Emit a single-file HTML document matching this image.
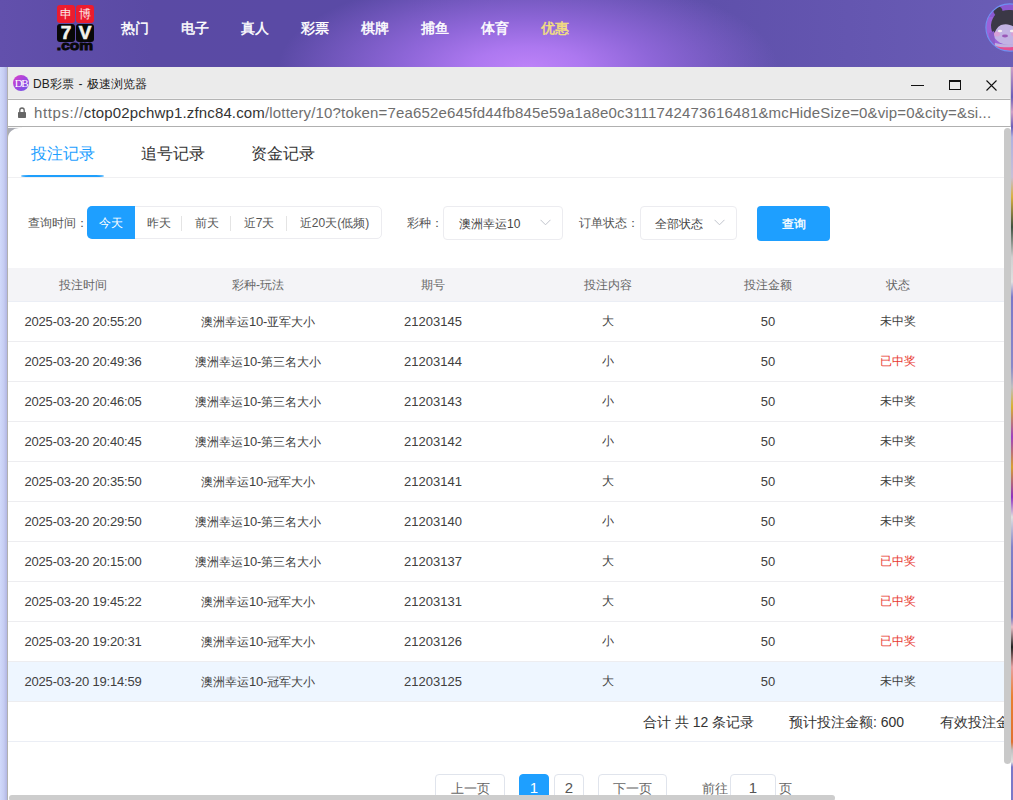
<!DOCTYPE html>
<html><head><meta charset="utf-8">
<style>
*{margin:0;padding:0;box-sizing:border-box}
html,body{width:1013px;height:800px;overflow:hidden;background:#6a5db6;font-family:"Liberation Sans",sans-serif;position:relative}
.a{position:absolute}
.t{position:absolute;white-space:nowrap}
#top{left:0;top:0;width:1013px;height:67px;
 background:radial-gradient(ellipse 250px 95px at 528px 68px,#bd82f8 0%,#ad78f0 22%,#8e66d8 50%,rgba(100,80,180,0) 100%),linear-gradient(90deg,#6250ac 0%,#5a4aa4 15%,#5a4aa6 40%,#5f50ab 70%,#6a5db6 100%)}
.nav{position:absolute;top:19px;color:#fff;font-size:14px;font-weight:normal;line-height:18px;-webkit-text-stroke:0.45px #fff}
#leftbg{left:0;top:67px;width:7px;height:733px;background:linear-gradient(90deg,#d0d9fb 0%,#c6cdf2 55%,#b2b6e4 100%)}
#rightbg{left:1011px;top:67px;width:2px;height:733px;background:linear-gradient(180deg,#d0a0c8 0px,#6a5cb8 30px,#d0a0c8 45px,#6a5cb8 60px,#b0b0e0 70px,#c8c0d8 110px,#d8b040 130px,#405040 160px,#d0d0d0 190px,#e0e0e0 215px,#7a78c8 230px,#8a88c8 300px,#c0c0c0 320px,#d8b030 340px,#a040c0 370px,#d8a030 400px,#9030c0 430px,#e0e0e0 450px,#8080c8 480px,#7070c0 550px,#e8c0c8 560px,#202020 580px,#e8a0a0 600px,#e88030 630px,#e07030 675px,#c0c0c0 683px,#e0e0e0 695px,#7a78c8 700px,#7a78c8 733px)}
#wborder{left:7px;top:67px;width:1px;height:733px;background:#b0b0b0}
#title{left:8px;top:67px;width:1003px;height:33px;background:linear-gradient(180deg,#ebebeb 0,#ebebeb 31px,#f0f0f0 31px);border-bottom:1px solid #b4b4b4;border-right:1px solid #d4d4d4}
#addr{left:8px;top:100px;width:1003px;height:27px;background:#fff;border-bottom:1px solid #b0b0b0;border-right:1px solid #d4d4d4}
#cbg{left:8px;top:128px;width:1003px;height:672px;background:#a9abb3}
#content{left:8px;top:127px;width:1003px;height:673px;background:#fff;overflow:hidden}
.c{position:absolute;white-space:nowrap}
.seg{position:absolute;top:0;height:32px;line-height:33px;font-size:12px;color:#555;text-align:center}
.sep{position:absolute;top:9px;width:1px;height:15px;background:#e4e4e4}
.row{position:absolute;left:0;width:996px;height:40px;border-bottom:1px solid #ededf0;font-size:12px;color:#404040;line-height:39px}
.n{font-size:13px;letter-spacing:-0.2px}
.row span.n.c3,.row span.n.c5{letter-spacing:0}
.row span,.hdr span{position:absolute;top:0;text-align:center;white-space:nowrap}

.c1{left:0;width:150px}.c2{left:150px;width:200px}.c3{left:350px;width:150px}.c4{left:500px;width:200px}.c5{left:700px;width:120px}.c6{left:820px;width:140px}
.red{color:#e83a32}
.pbtn{position:absolute;top:647px;height:32px;border:1px solid #e0e4ec;border-radius:4px;font-size:13px;color:#666;text-align:center;line-height:28px;background:#fff}
</style></head><body>
<div id="top" class="a">
  <div class="nav" style="left:121px">热门</div>
  <div class="nav" style="left:181px">电子</div>
  <div class="nav" style="left:241px">真人</div>
  <div class="nav" style="left:301px">彩票</div>
  <div class="nav" style="left:361px">棋牌</div>
  <div class="nav" style="left:421px">捕鱼</div>
  <div class="nav" style="left:481px">体育</div>
  <div class="nav" style="left:541px;color:#f5e07c;-webkit-text-stroke-color:#f5e07c">优惠</div>
  <!-- logo -->
  <div class="a" style="left:57px;top:5px;width:18px;height:18px;background:#ec1c2e;border-radius:3px"></div>
  <div class="a" style="left:76px;top:5px;width:18px;height:18px;background:#ec1c2e;border-radius:3px"></div>
  <div class="t" style="left:57px;top:5px;width:18px;line-height:18px;font-size:12px;color:#fde8e8;text-align:center">申</div>
  <div class="t" style="left:76px;top:5px;width:18px;line-height:18px;font-size:12px;color:#fde8e8;text-align:center">博</div>
  <div class="a" style="left:57px;top:24px;width:18px;height:18px;background:#080808;border-radius:3px"></div>
  <div class="a" style="left:76px;top:24px;width:18px;height:18px;background:#080808;border-radius:3px"></div>
  <div class="t" style="left:57px;top:24px;width:18px;line-height:18px;font-size:19px;font-weight:bold;color:#f2f2ec;text-align:center;-webkit-text-stroke:0.6px #f2f2ec">7</div>
  <div class="t" style="left:76px;top:24px;width:18px;line-height:18px;font-size:19px;font-weight:bold;color:#f2f2ec;text-align:center;-webkit-text-stroke:0.6px #f2f2ec">V</div>
  <div class="t" style="left:56px;top:39px;width:38px;line-height:14px;font-size:13.5px;font-weight:bold;color:#080808;text-align:center;-webkit-text-stroke:0.9px #080808;transform:scaleX(1.15);transform-origin:50% 50%">.com</div>
  <!-- avatar -->
  <svg class="a" style="left:985px;top:3px" width="49" height="49" viewBox="0 0 49 49">
    <defs><clipPath id="cc"><circle cx="24.5" cy="24.5" r="23.6"/></clipPath></defs>
    <g clip-path="url(#cc)">
      <rect x="0" y="0" width="49" height="49" fill="#9a62d8"/>
      <rect x="0" y="0" width="49" height="14" fill="#8a58d0"/>
      <ellipse cx="24" cy="27" rx="17" ry="15" fill="#c2b2e4"/>
      <path d="M6 22 C7 12 14 7 24 7 C34 7 42 11 48 16 L48 22 C42 19 36 18 30 19 L29 24 C26 22 22 20 16 22 C12 24 10 28 9 32 C7 30 6 26 6 22Z" fill="#3b3846"/>
      <circle cx="13" cy="8" r="4.5" fill="#3b3846"/>
      <path d="M4 30 L9 28 L10 40 L5 42Z" fill="#8a5ec8"/>
      <ellipse cx="12" cy="31" rx="3" ry="2.5" fill="#d8a0d8"/>
      <ellipse cx="29" cy="31" rx="3" ry="2.5" fill="#d8a0d8"/>
      <ellipse cx="15" cy="28" rx="2.2" ry="1.3" fill="#f4ecf0"/>
      <ellipse cx="27" cy="28" rx="2.2" ry="1.3" fill="#f4ecf0"/>
      <ellipse cx="20" cy="33" rx="3" ry="1.4" fill="#9a58b8"/>
      <path d="M8 41 C16 44 30 44 49 40 L49 49 L8 49Z" fill="#e45092"/>
      <path d="M10 40 C18 42 30 42 49 38 L49 41 C30 45 18 45 10 43Z" fill="#c0b0e0"/>
    </g>
    <circle cx="24.5" cy="24.5" r="23.6" fill="none" stroke="#6f90f2" stroke-width="1.1"/>
  </svg>
</div>
<div id="leftbg" class="a"></div>
<div id="rightbg" class="a"></div>
<div id="wborder" class="a"></div>
<div id="title" class="a">
  <div class="a" style="left:5px;top:8px;width:16px;height:16px;border-radius:50%;background:linear-gradient(135deg,#e040c8 0%,#a048e0 50%,#6a58e8 100%)"></div>
  <div class="t" style="left:6px;top:8px;width:14px;line-height:17px;font-family:'Liberation Serif',serif;font-size:11px;color:#fff;text-align:center;letter-spacing:-1.5px">DB</div>
  <div class="t" style="left:25px;top:10px;font-size:12px;line-height:14px;color:#222;word-spacing:1.5px">DB彩票 - 极速浏览器</div>
  <!-- window controls -->
  <div class="a" style="left:903px;top:18px;width:13px;height:1px;background:#111"></div>
  <div class="a" style="left:941px;top:13px;width:12px;height:10px;border:1px solid #111;border-top-width:2px"></div>
  <svg class="a" style="left:978px;top:13px" width="11" height="11" viewBox="0 0 11 11"><path d="M0.5 0.5L10.5 10.5M10.5 0.5L0.5 10.5" stroke="#111" stroke-width="1.1"/></svg>
</div>
<div id="addr" class="a">
  <svg class="a" style="left:10px;top:7px" width="8" height="11" viewBox="0 0 8 11"><path d="M1.8 5V3.2A2.2 2.2 0 0 1 6.2 3.2V5" fill="none" stroke="#666" stroke-width="1.3"/><rect x="0" y="5" width="8" height="6" rx="0.8" fill="#666"/></svg>
  <div class="t" style="left:26px;top:4px;font-size:15px;line-height:18px;color:#6e6e6e;letter-spacing:0.155px"><span style="letter-spacing:0.6px">https://</span><span style="color:#333">ctop02pchwp1.zfnc84.com</span>/lottery/10?token=7ea652e645fd44fb845e59a1a8e0c3111742473616481&amp;mcHideSize=0&amp;vip=0&amp;city=&amp;si...</div>
</div>

<div id="content" class="a">
  <!-- tabs -->
  <div class="c" style="left:23px;top:17px;font-size:16px;line-height:20px;color:#1e9fff">投注记录</div>
  <div class="c" style="left:133px;top:17px;font-size:16px;line-height:20px;color:#333">追号记录</div>
  <div class="c" style="left:243px;top:17px;font-size:16px;line-height:20px;color:#333">资金记录</div>
  <div class="a" style="left:13px;top:48px;width:83px;height:2px;border-radius:8px/1px;background:#1f9ffc"></div>
  <div class="a" style="left:0;top:50px;width:996px;height:1px;background:#f0f0f2"></div>
  <!-- filter -->
  <div class="c" style="left:20px;top:89px;font-size:12px;line-height:15px;color:#555">查询时间：</div>
  <div class="a" style="left:79px;top:79px;width:295px;height:33px;border:1px solid #ececf0;border-radius:5px">
    <div class="seg" style="left:47px;width:47px">昨天</div>
    <div class="sep" style="left:93px"></div>
    <div class="seg" style="left:95px;width:48px">前天</div>
    <div class="sep" style="left:142px"></div>
    <div class="seg" style="left:143px;width:56px">近7天</div>
    <div class="sep" style="left:198px"></div>
    <div class="seg" style="left:199px;width:95px">近20天(低频)</div>
  </div>
  <div class="a" style="left:79px;top:79px;width:48px;height:33px;background:#1e9fff;color:#fff;border-radius:5px 0 0 5px;font-size:12px;text-align:center;line-height:34px">今天</div>
  <div class="c" style="left:399px;top:89px;font-size:12px;line-height:15px;color:#555">彩种：</div>
  <div class="a" style="left:435px;top:79px;width:120px;height:34px;border:1px solid #ececf0;border-radius:4px"></div>
  <div class="c" style="left:451px;top:90px;font-size:12px;line-height:15px;color:#444">澳洲幸运10</div>
  <svg class="a" style="left:532px;top:92px" width="11" height="7" viewBox="0 0 11 7"><path d="M0.5 0.8L5.5 5.8L10.5 0.8" fill="none" stroke="#c0c4cc" stroke-width="1"/></svg>
  <div class="c" style="left:571px;top:89px;font-size:12px;line-height:15px;color:#555">订单状态：</div>
  <div class="a" style="left:632px;top:79px;width:97px;height:34px;border:1px solid #ececf0;border-radius:4px"></div>
  <div class="c" style="left:647px;top:90px;font-size:12px;line-height:15px;color:#444">全部状态</div>
  <svg class="a" style="left:706px;top:92px" width="11" height="7" viewBox="0 0 11 7"><path d="M0.5 0.8L5.5 5.8L10.5 0.8" fill="none" stroke="#c0c4cc" stroke-width="1"/></svg>
  <div class="a" style="left:749px;top:79px;width:73px;height:35px;background:#1e9fff;border-radius:4px;color:#fff;font-size:12px;font-weight:normal;-webkit-text-stroke:0.35px #fff;text-align:center;line-height:36px">查询</div>
  <!-- table header -->
  <div class="hdr a" style="left:0;top:141px;width:996px;height:34px;background:#f4f4f7;border-bottom:1px solid #ebeef5;font-size:12px;color:#666;line-height:34px;padding-top:1px">
    <span class="c1">投注时间</span><span class="c2">彩种-玩法</span><span class="c3">期号</span><span class="c4">投注内容</span><span class="c5">投注金额</span><span class="c6">状态</span>
  </div>
  <!-- rows -->
  <div class="row" style="top:175px"><span class="c1 n">2025-03-20 20:55:20</span><span class="c2">澳洲幸运<span class="n" style="position:static">10-</span>亚军大小</span><span class="c3 n">21203145</span><span class="c4">大</span><span class="c5 n">50</span><span class="c6">未中奖</span></div>
  <div class="row" style="top:215px"><span class="c1 n">2025-03-20 20:49:36</span><span class="c2">澳洲幸运<span class="n" style="position:static">10-</span>第三名大小</span><span class="c3 n">21203144</span><span class="c4">小</span><span class="c5 n">50</span><span class="c6 red">已中奖</span></div>
  <div class="row" style="top:255px"><span class="c1 n">2025-03-20 20:46:05</span><span class="c2">澳洲幸运<span class="n" style="position:static">10-</span>第三名大小</span><span class="c3 n">21203143</span><span class="c4">小</span><span class="c5 n">50</span><span class="c6">未中奖</span></div>
  <div class="row" style="top:295px"><span class="c1 n">2025-03-20 20:40:45</span><span class="c2">澳洲幸运<span class="n" style="position:static">10-</span>第三名大小</span><span class="c3 n">21203142</span><span class="c4">小</span><span class="c5 n">50</span><span class="c6">未中奖</span></div>
  <div class="row" style="top:335px"><span class="c1 n">2025-03-20 20:35:50</span><span class="c2">澳洲幸运<span class="n" style="position:static">10-</span>冠军大小</span><span class="c3 n">21203141</span><span class="c4">大</span><span class="c5 n">50</span><span class="c6">未中奖</span></div>
  <div class="row" style="top:375px"><span class="c1 n">2025-03-20 20:29:50</span><span class="c2">澳洲幸运<span class="n" style="position:static">10-</span>第三名大小</span><span class="c3 n">21203140</span><span class="c4">小</span><span class="c5 n">50</span><span class="c6">未中奖</span></div>
  <div class="row" style="top:415px"><span class="c1 n">2025-03-20 20:15:00</span><span class="c2">澳洲幸运<span class="n" style="position:static">10-</span>第三名大小</span><span class="c3 n">21203137</span><span class="c4">大</span><span class="c5 n">50</span><span class="c6 red">已中奖</span></div>
  <div class="row" style="top:455px"><span class="c1 n">2025-03-20 19:45:22</span><span class="c2">澳洲幸运<span class="n" style="position:static">10-</span>冠军大小</span><span class="c3 n">21203131</span><span class="c4">大</span><span class="c5 n">50</span><span class="c6 red">已中奖</span></div>
  <div class="row" style="top:495px"><span class="c1 n">2025-03-20 19:20:31</span><span class="c2">澳洲幸运<span class="n" style="position:static">10-</span>冠军大小</span><span class="c3 n">21203126</span><span class="c4">小</span><span class="c5 n">50</span><span class="c6 red">已中奖</span></div>
  <div class="row" style="top:535px;background:#eef6ff"><span class="c1 n">2025-03-20 19:14:59</span><span class="c2">澳洲幸运<span class="n" style="position:static">10-</span>冠军大小</span><span class="c3 n">21203125</span><span class="c4">大</span><span class="c5 n">50</span><span class="c6">未中奖</span></div>
  <!-- summary -->
  <div class="a" style="left:0;top:575px;width:996px;height:40px;border-bottom:1px solid #ebeef5"></div>
  <div class="c" style="left:635px;top:587px;font-size:14px;line-height:16px;color:#333">合计 共 12 条记录</div>
  <div class="c" style="left:781px;top:587px;font-size:14px;line-height:16px;color:#333">预计投注金额: 600</div>
  <div class="c" style="left:932px;top:587px;font-size:14px;line-height:16px;color:#333">有效投注金额: 600</div>
  <!-- pagination -->
  <div class="pbtn" style="left:427px;width:70px">上一页</div>
  <div class="pbtn" style="left:511px;width:30px;background:#1e9fff;border-color:#1e9fff;color:#fff;font-size:15px;line-height:25px">1</div>
  <div class="pbtn" style="left:546px;width:30px;font-size:15px;line-height:25px;color:#555">2</div>
  <div class="pbtn" style="left:590px;width:69px">下一页</div>
  <div class="c" style="left:694px;top:654px;font-size:13px;line-height:16px;color:#666">前往</div>
  <div class="pbtn" style="left:722px;width:46px;font-size:15px;line-height:25px;color:#555">1</div>
  <div class="c" style="left:771px;top:654px;font-size:13px;line-height:16px;color:#666">页</div>
  <!-- scrollbars -->
  <div class="a" style="left:996px;top:1px;width:7px;height:636px;border-radius:3.5px;background:#c9c9c9"></div>
  <div class="a" style="left:1px;top:668px;width:826px;height:6px;border-radius:3px;background:#cdcdcd"></div>
</div>
<svg class="a" style="left:8px;top:127px" width="14" height="12" viewBox="0 0 14 12"><rect x="0" y="0" width="14" height="1" fill="#f6f6f6"/><path d="M0 1 L11 1 A11 10 0 0 0 0 11 Z" fill="#a9abb3"/></svg>
</body></html>
